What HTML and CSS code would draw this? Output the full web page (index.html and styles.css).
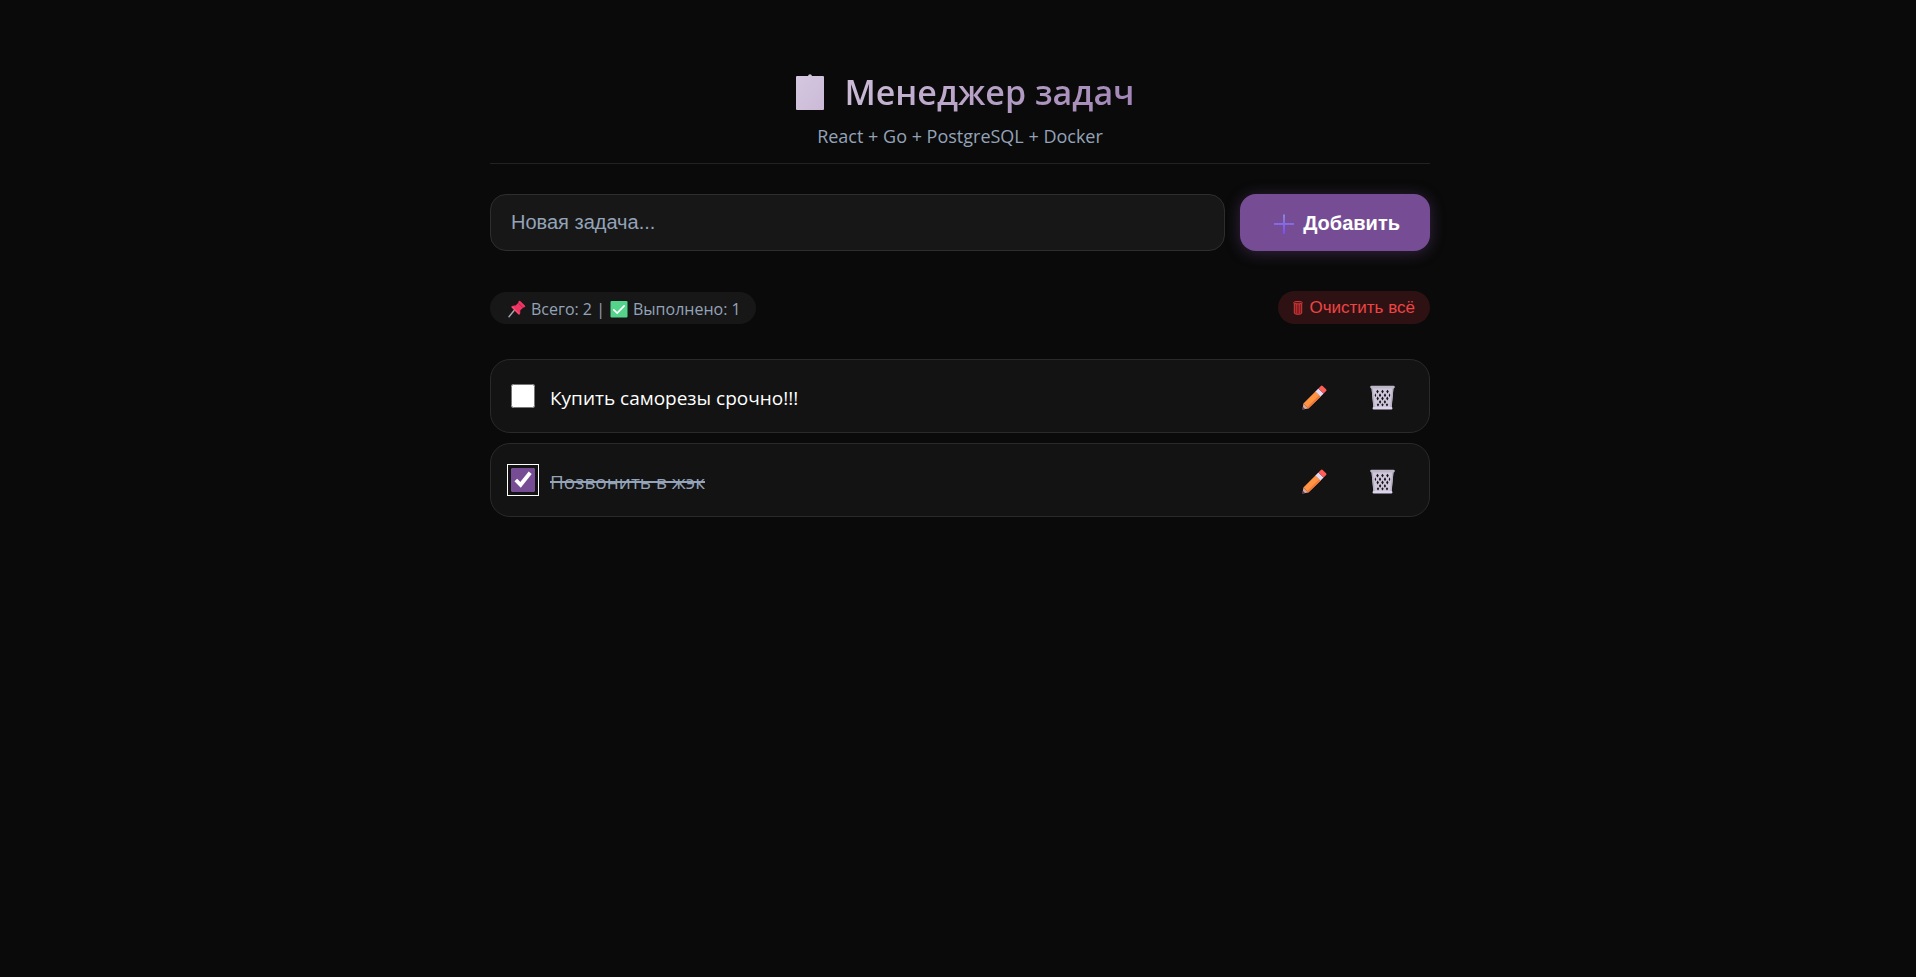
FILE: index.html
```html
<!DOCTYPE html>
<html lang="ru">
<head>
<meta charset="utf-8">
<title>Менеджер задач</title>
<link rel="stylesheet" href="styles.css">
</head>
<body>
<svg class="sprite" width="0" height="0" aria-hidden="true">
  <defs>
    <linearGradient id="orange" x1="0" y1="0" x2="1" y2="1"><stop offset="0" stop-color="#ff8a3c"/><stop offset="1" stop-color="#ffa04a"/></linearGradient>
    <linearGradient id="plus" x1="0" y1="0" x2="0" y2="1"><stop offset="0" stop-color="#8a86d8"/><stop offset="1" stop-color="#7a4cf0"/></linearGradient>
    <linearGradient id="board" x1="0" y1="0" x2="1" y2="1"><stop offset="0" stop-color="#d5c8e0"/><stop offset="1" stop-color="#cbbad7"/></linearGradient>
    <symbol id="pencil" viewBox="0 0 25 25">
      <path d="M0.5 24.5 1.4 18.6 6.4 23.6Z" fill="#d9a79b"/>
      <path d="M0.3 24.7 0.8 21.8 3.2 24.2Z" fill="#5c3a50"/>
      <path d="M1.4 18.6 13.6 6.2 18.8 11.4 6.4 23.6Z" fill="url(#orange)"/>
      <path d="M5 22.2 17.4 10 18.8 11.4 6.4 23.6Z" fill="#f0783a"/>
      <path d="M13.4 6.4 16.4 3.4 21.6 8.6 18.6 11.6Z" fill="#e2d9f3"/>
      <path d="M16.4 3.4 18.9.9Q19.8 0 20.7.9L24.1 4.3Q25 5.2 24.1 6.1L21.6 8.6Z" fill="#ff5d55"/>
    </symbol>
    <symbol id="basket" viewBox="0 0 25 25">
      <path d="M1.4 2H23.6L21.6 23.500H3.4Z" fill="#cfc8da"/>
      <g fill="#17131c">
        <path d="M7.500 4.800l1.300 1.800-1.300 1.800-1.300-1.800zM12.500 4.800l1.300 1.800-1.300 1.800-1.300-1.800zM17.500 4.800l1.300 1.800-1.300 1.800-1.300-1.800z"/>
        <path d="M5.200 8.200l1 2-.8 2-.7-2zM10 8.200l1.200 2-1.200 2-1.200-2zM15 8.200l1.200 2-1.200 2-1.200-2zM19.800 8.200l.5 2-.8 2-.8-2z"/>
        <path d="M7.700 11.600l1.200 2-1.200 2-1.200-2zM12.500 11.600l1.300 2-1.300 2-1.300-2zM17.300 11.600l1.200 2-1.200 2-1.200-2z"/>
        <path d="M10.100 15l1.200 1.900-1.200 1.900-1.200-1.900zM14.900 15l1.200 1.900-1.200 1.900-1.200-1.900z"/>
        <path d="M8 18.200l1.200 1.600-1.200 1.600-1.200-1.600zM12.500 18.200l1.200 1.600-1.200 1.600-1.200-1.600zM17 18.200l1.200 1.600-1.200 1.600-1.200-1.600z"/>
      </g>
      <path d="M2.200 3 4.200 23M22.800 3 20.800 23" stroke="#b4adc0" stroke-width="1.300" fill="none"/>
      <rect x="0.200" y="0.800" width="24.600" height="2.600" rx="1.300" fill="#bcb6c6"/>
      <rect x="2.600" y="22" width="19.800" height="2.400" rx="1" fill="#dcd4ec"/>
    </symbol>
  </defs>
</svg>
<main class="app">
  <header class="header">
    <h1 class="title">
      <svg class="title-icon" viewBox="0 0 28 36" aria-hidden="true"><path d="M1 2H12Q12.400.3 14 .3T16 2H27Q28 2 28 3V35Q28 36 27 36H1Q0 36 0 35V3Q0 2 1 2Z" fill="url(#board)"/></svg>
      <span>Менеджер задач</span>
    </h1>
    <p class="subtitle">React + Go + PostgreSQL + Docker</p>
  </header>

  <form class="add-form">
    <input class="add-input" type="text" placeholder="Новая задача..." aria-label="Новая задача">
    <button class="add-button" type="button">
      <svg class="plus-icon" viewBox="0 0 20 20" aria-hidden="true"><path d="M9 0.500H11V9H20V11H11V20H9V11H0V9H9Z" fill="url(#plus)"/></svg>
      <span>Добавить</span>
    </button>
  </form>

  <section class="toolbar">
    <div class="stats">
      <svg class="stat-icon" viewBox="0 0 18 18" aria-hidden="true">
        <path d="M6.300 10.200 1 16.700" stroke="#a9a4b3" stroke-width="1.400" stroke-linecap="round"/>
        <path d="M10.500 1.500Q11.300.2 12.500 1.200L16.900 5.400Q17.800 6.500 16.600 7.200L15.400 7.400 12.300 10.300Q12.600 13 11.600 14.400 11 15 10.400 14.400L3.500 7.500Q2.900 6.900 3.600 6.300 5 5.300 7.600 5.600L10.300 2.800Z" fill="#ee3564"/>
        <path d="M10.700 3.500 14.700 7.300" stroke="#b81f50" stroke-width="1" fill="none"/>
        <path d="M4.400 7 10.900 13.600" stroke="#ff6c87" stroke-width=".8" fill="none"/>
      </svg>
      <span>Всего: 2 |</span>
      <svg class="stat-icon" viewBox="0 0 18 18" aria-hidden="true"><rect x="0.500" y="1" width="17" height="16.500" rx="1" fill="#54d38b"/><path d="M3.800 9.800 7.200 13 14.200 5.800" fill="none" stroke="#fff" stroke-width="1.700" stroke-linecap="round"/></svg>
      <span>Выполнено: 1</span>
    </div>
    <button class="clear-button" type="button">
      <svg class="clear-icon" viewBox="0 0 10 14" aria-hidden="true"><path d="M1.300 2V12Q1.300 13.300 5 13.300T8.700 12V2" fill="#7d1d20" stroke="#d5393c"/><path d="M3.600 3V12.500M6.300 3V12.500" stroke="#c43236" stroke-width=".9"/><ellipse cx="5" cy="1.700" rx="4.400" ry="1.200" fill="#451416" stroke="#d5393c"/></svg>
      <span>Очистить всё</span>
    </button>
  </section>

  <ul class="tasks">
    <li class="task">
      <input class="task-check" type="checkbox" id="task-1">
      <label class="task-text" for="task-1">Купить саморезы срочно!!!</label>
      <button class="icon-button" type="button" aria-label="Изменить"><svg viewBox="0 0 25 25"><use href="#pencil"/></svg></button>
      <button class="icon-button" type="button" aria-label="Удалить"><svg viewBox="0 0 25 25"><use href="#basket"/></svg></button>
    </li>
    <li class="task">
      <input class="task-check task-check-focused" type="checkbox" id="task-2" checked>
      <label class="task-text task-done" for="task-2">Позвонить в жэк</label>
      <button class="icon-button" type="button" aria-label="Изменить"><svg viewBox="0 0 25 25"><use href="#pencil"/></svg></button>
      <button class="icon-button" type="button" aria-label="Удалить"><svg viewBox="0 0 25 25"><use href="#basket"/></svg></button>
    </li>
  </ul>
</main>
</body>
</html>
```
FILE: styles.css
```css
* { box-sizing: border-box; }

body {
  margin: 0;
  padding-left: 4px;
  min-height: 100vh;
  background: #0a0a0a;
  color: #fff;
  font-family: "Open Sans", "Noto Sans", sans-serif;
}

button, input { font-family: "Liberation Sans", Arial, sans-serif; }
button { border: 0; cursor: pointer; }

.sprite { position: absolute; }

.app {
  max-width: 980px;
  margin: 0 auto;
  padding: 64px 20px;
}

.header {
  padding-bottom: 14px;
  border-bottom: 1px solid #222;
  margin-bottom: 30px;
  text-align: center;
}

.title {
  display: flex;
  justify-content: center;
  align-items: center;
  gap: 20px;
  margin: 0;
  padding-left: 11px;
  font-size: 34px;
  line-height: 56px;
  font-weight: 600;
  background: linear-gradient(135deg, #fff, #764d94);
  background-clip: text;
  -webkit-background-clip: text;
  color: transparent;
}
.title-icon { width: 28px; height: 36px; }

.subtitle {
  margin: 4px 0 0;
  font-size: 18px;
  line-height: 25px;
  color: #94a3b8;
}

.add-form {
  display: flex;
  gap: 15px;
  margin-bottom: 40px;
}
.add-input {
  flex: 1;
  min-width: 0;
  height: 57px;
  padding: 0 20px;
  border: 1px solid #2e2e2e;
  border-radius: 16px;
  background: #171717;
  color: #fff;
  font-size: 20px;
}
.add-input::placeholder { color: #94a3b8; }
.add-button {
  display: flex;
  align-items: center;
  gap: 9px;
  padding: 2px 30px 0 34px;
  border-radius: 16px;
  background: #764d94;
  color: #fff;
  font-size: 20px;
  font-weight: 700;
  box-shadow: 0 2px 15px rgba(118, 77, 148, 0.4);
}
.plus-icon { width: 20px; height: 20px; }

.toolbar {
  display: flex;
  justify-content: space-between;
  align-items: center;
  margin-bottom: 35px;
}
.stats {
  display: flex;
  align-items: center;
  gap: 5px;
  padding: 5px 15px 3px 18px;
  border-radius: 30px;
  background: #171717;
  color: #94a3b8;
  font-size: 16px;
  line-height: 24px;
}
.stat-icon { width: 18px; height: 18px; }
.clear-button {
  display: flex;
  align-items: center;
  gap: 6px;
  padding: 0 15px;
  border-radius: 30px;
  background: #2e1213;
  color: #ef4444;
  font-size: 17px;
  line-height: 33px;
}
.clear-icon { width: 10px; height: 14px; }

.tasks {
  display: flex;
  flex-direction: column;
  gap: 10px;
  margin: 0;
  padding: 0;
  list-style: none;
}
.task {
  display: flex;
  align-items: center;
  gap: 15px;
  padding: 15px 20px;
  border: 1px solid #2a2a2a;
  border-radius: 20px;
  background: #131313;
}
.task-check {
  width: 24px;
  height: 24px;
  margin: 0;
  accent-color: #764d94;
}
.task-check-focused {
  border-radius: 3px;
  outline: 1px solid #fff;
  outline-offset: 3px;
}
.task-text {
  flex: 1;
  padding-top: 3px;
  font-size: 19px;
  line-height: 26px;
}
.task-done {
  color: #94a3b8;
  text-decoration: line-through 2px;
}
.icon-button {
  display: flex;
  align-items: center;
  justify-content: center;
  width: 53px;
  height: 42px;
  padding: 2px 0 0;
  background: none;
}
.icon-button svg { width: 25px; height: 25px; }
```
